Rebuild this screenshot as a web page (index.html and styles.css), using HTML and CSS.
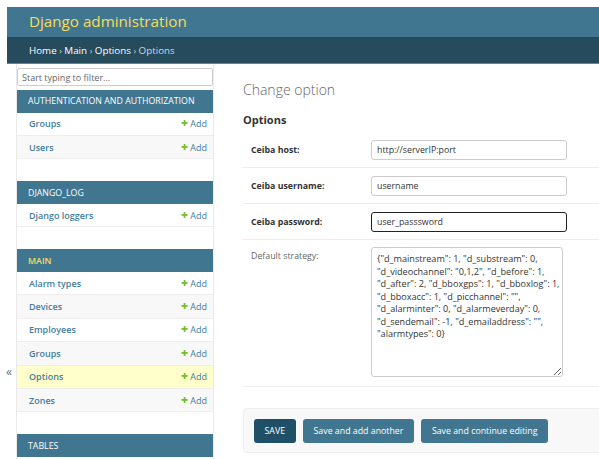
FILE: index.html
```html
<!DOCTYPE html>
<html lang="en">
<head>
<meta charset="utf-8">
<title>Change option | Django site admin</title>
<link rel="stylesheet" href="styles.css">
</head>
<body>
<div class="page">
  <header class="header">
    <div class="branding">Django administration</div>
  </header>
  <nav class="breadcrumbs">
    <span class="crumbs"><a href="#">Home</a> <span class="sep">›</span> <a href="#">Main</a> <span class="sep">›</span> <a href="#">Options</a> <span class="sep">›</span> <span class="cur">Options</span></span>
  </nav>
  <div class="main">
    <div class="toggle"><span class="toggle-icon">«</span></div>
    <aside class="sidebar">
      <input class="filter" type="search" placeholder="Start typing to filter...">
      <div class="module">
        <div class="caption">Authentication and Authorization</div>
        <div class="row"><a class="model" href="#">Groups</a><a class="add" href="#"><span class="plus">+</span> Add</a></div>
        <div class="row alt"><a class="model" href="#">Users</a><a class="add" href="#"><span class="plus">+</span> Add</a></div>
      </div>
      <div class="module">
        <div class="caption">Django_log</div>
        <div class="row"><a class="model" href="#">Django loggers</a><a class="add" href="#"><span class="plus">+</span> Add</a></div>
      </div>
      <div class="module">
        <div class="caption current">Main</div>
        <div class="row"><a class="model" href="#">Alarm types</a><a class="add" href="#"><span class="plus">+</span> Add</a></div>
        <div class="row alt"><a class="model" href="#">Devices</a><a class="add" href="#"><span class="plus">+</span> Add</a></div>
        <div class="row"><a class="model" href="#">Employees</a><a class="add" href="#"><span class="plus">+</span> Add</a></div>
        <div class="row alt"><a class="model" href="#">Groups</a><a class="add" href="#"><span class="plus">+</span> Add</a></div>
        <div class="row selected"><a class="model" href="#">Options</a><a class="add" href="#"><span class="plus">+</span> Add</a></div>
        <div class="row alt"><a class="model" href="#">Zones</a><a class="add" href="#"><span class="plus">+</span> Add</a></div>
      </div>
      <div class="module">
        <div class="caption">Tables</div>
      </div>
    </aside>
    <main class="content">
      <h1 class="title">Change option</h1>
      <h2 class="fs-title">Options</h2>
      <div class="form-row">
        <label class="required">Ceiba host:</label>
        <input class="field" type="text" value="http://serverIP:port">
      </div>
      <div class="form-row">
        <label class="required">Ceiba username:</label>
        <input class="field" type="text" value="username">
      </div>
      <div class="form-row">
        <label class="required">Ceiba password:</label>
        <input class="field focused" type="text" value="user_passsword">
      </div>
      <div class="form-row last">
        <label>Default strategy:</label>
        <textarea class="area">{"d_mainstream": 1, "d_substream": 0, "d_videochannel": "0,1,2", "d_before": 1, "d_after": 2, "d_bboxgps": 1, "d_bboxlog": 1, "d_bboxacc": 1, "d_picchannel": "", "d_alarminter": 0, "d_alarmeverday": 0, "d_sendemail": -1, "d_emailaddress": "", "alarmtypes": 0}</textarea>
      </div>
      <div class="submit-row">
        <button class="btn default">SAVE</button>
        <button class="btn">Save and add another</button>
        <button class="btn">Save and continue editing</button>
      </div>
    </main>
  </div>
</div>
</body>
</html>
```
FILE: styles.css
```css
* { box-sizing: border-box; }
html, body { margin: 0; padding: 0; background: #fff; }
body {
  font-family: "Open Sans", "Noto Sans", sans-serif;
  color: #333;
  overflow: hidden;
}
.page {
  padding: 7px 0 0 7px;
  height: 459px;
  overflow: hidden;
}
.header {
  height: 30px;
  background: #417690;
  display: flex;
  align-items: center;
  padding-left: 22px;
}
.branding {
  color: #f5dd5d;
  font-size: 15.2px;
  font-weight: 400;
  margin-top: -2px;
}
.breadcrumbs {
  height: 27px;
  background: #264b5d;
  border-bottom: 1px solid #5f8799;
  font-size: 9.8px;
  display: flex;
  align-items: center;
  padding-left: 22px;
}
.crumbs { color: #c4dce8; white-space: nowrap; }
.breadcrumbs a { color: #fff; text-decoration: none; }
.breadcrumbs .sep { color: #c4dce8; font-size: 8.5px; }
.breadcrumbs .cur { color: #c4dce8; }
.main {
  display: flex;
  height: 400px;
}
.toggle {
  width: 10px;
  flex: 0 0 10px;
  border-right: 1px solid #eaeaea;
  padding-top: 302px;
  text-align: left;
}
.toggle-icon {
  display: block;
  color: #447e9b;
  font-size: 12px;
  line-height: 12px;
  margin-left: -1px;
}
.sidebar {
  width: 197px;
  flex: 0 0 197px;
  border-right: 1px solid #eaeaea;
  padding-top: 4px;
}
.filter {
  display: block;
  width: 196px;
  height: 18px;
  border: 1px solid #ccc;
  border-radius: 2px;
  padding: 0 4px;
  font-family: inherit;
  font-size: 9px;
  color: #333;
  margin: 0 0 4px 0;
  background: #fff;
}
.filter::placeholder { color: #666; }
.module { margin-bottom: 22px; }
.caption {
  height: 22.6px;
  background: #417690;
  color: #fff;
  font-size: 8.8px;
  text-transform: uppercase;
  padding-left: 11px;
  display: flex;
  align-items: center;
}
.caption.current { color: #f5dd5d; font-weight: 600; }
.row {
  height: 23.4px;
  display: flex;
  align-items: center;
  justify-content: space-between;
  padding: 0 6px 0 12px;
  border-bottom: 1px solid #eee;
  background: #fff;
  font-size: 9px;
}
.row.alt { background: #f8f8f8; }
.row.selected { background: #ffc; }
.model { color: #447e9b; text-decoration: none; font-weight: 600; }
.add { color: #447e9b; text-decoration: none; }
.plus { color: #70bf2b; font-weight: 800; font-size: 12px; line-height: 10px; }
.content {
  flex: 1;
  padding-left: 29px;
  min-width: 0;
}
.title {
  font-size: 14px;
  font-weight: 300;
  color: #666;
  margin: 16px 0 0 0;
  line-height: 20px;
}
.fs-title {
  font-size: 11px;
  font-weight: 700;
  color: #333;
  margin: 12px 0 0 0;
  line-height: 16px;
}
.form-row {
  display: flex;
  align-items: flex-start;
  padding: 8px 0 7px 8px;
  border-bottom: 1px solid #eee;
}
.fs-title + .form-row { margin-top: 4px; }
.form-row label {
  width: 120px;
  flex: 0 0 120px;
  font-size: 8.8px;
  color: #666;
  line-height: 20px;
}
.form-row label.required { color: #333; font-weight: 700; }
.form-row.last { padding-top: 7px; padding-bottom: 9px; }
.form-row.last label { line-height: 18px; }
.field {
  width: 196px;
  height: 20px;
  border: 1px solid #ccc;
  border-radius: 3px;
  padding: 0 5px;
  font-family: inherit;
  font-size: 8.8px;
  color: #333;
  background: #fff;
}
.field.focused {
  border: 1.5px solid #222;
  outline: none;
}
.area {
  width: 192px;
  height: 130px;
  border: 1px solid #ccc;
  border-radius: 3px;
  padding: 5px 1px 4px 5px;
  font-family: inherit;
  font-size: 9.1px;
  line-height: 12.5px;
  color: #333;
  resize: vertical;
  background: #fff;
  overflow: hidden;
}
.submit-row {
  display: flex;
  gap: 7.5px;
  margin-top: 21px;
  height: 45px;
  align-items: center;
  padding-left: 10px;
  background: #f8f8f8;
  border: 1px solid #eee;
  border-radius: 4px;
  margin-right: -4px;
}
.btn {
  height: 24px;
  border: 0;
  border-radius: 3px;
  background: #417690;
  color: #fff;
  font-family: inherit;
  font-size: 8.8px;
  padding: 0 10.5px;
}
.btn.default { background: #205067; padding: 0 10.5px; }
```
